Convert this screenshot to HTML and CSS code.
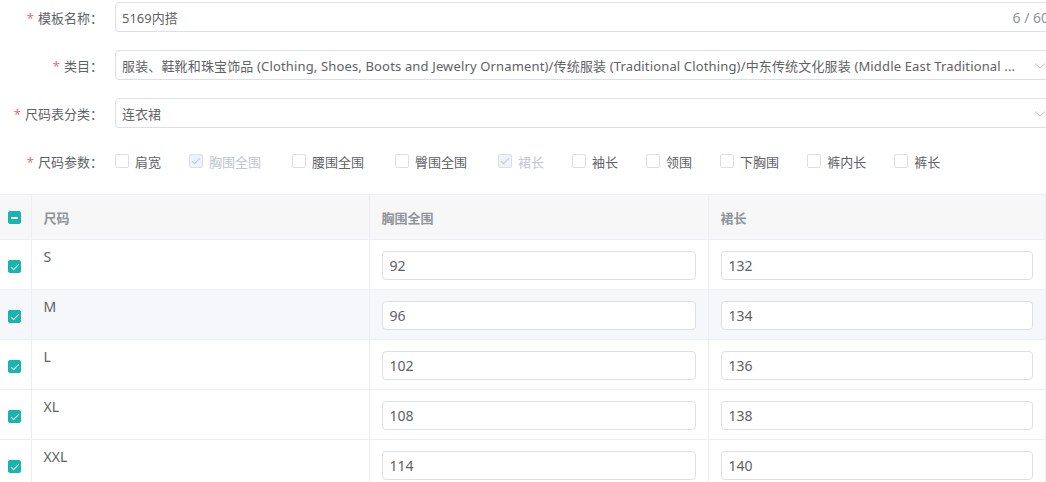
FILE: index.html
```html
<!DOCTYPE html>
<html lang="zh-CN">
<head>
  <meta charset="UTF-8" />
  <meta name="viewport" content="width=device-width, initial-scale=1.0"/>
  <title>尺码表模板</title>
  <link rel="stylesheet" href="styles.css">
</head>
<body>

  <form class="form">
    <div class="form-item">
      <label class="form-label required">模板名称：</label>
      <div class="input has-count">
        <span class="input-value">5169内搭</span>
        <span class="input-count">6 / 60</span>
      </div>
    </div>

    <div class="form-item">
      <label class="form-label required">类目：</label>
      <div class="input select">
        <span class="input-value long">服装、鞋靴和珠宝饰品 (Clothing, Shoes, Boots and Jewelry Ornament)/传统服装 (Traditional Clothing)/中东传统文化服装 (Middle East Traditional ...</span>
        <svg class="arrow" width="12" height="8" viewBox="0 0 12 8"><polyline points="1,1.5 6,6 11,1.5" fill="none" stroke="#c0c4cc" stroke-width="1"/></svg>
      </div>
    </div>

    <div class="form-item">
      <label class="form-label required">尺码表分类：</label>
      <div class="input select">
        <span class="input-value">连衣裙</span>
        <svg class="arrow" width="12" height="8" viewBox="0 0 12 8"><polyline points="1,1.5 6,6 11,1.5" fill="none" stroke="#c0c4cc" stroke-width="1"/></svg>
      </div>
    </div>

    <div class="form-item">
      <label class="form-label required">尺码参数：</label>
      <div class="checkbox-group">
        <span class="check-item"><span class="checkbox"></span>肩宽</span>
        <span class="check-item wide disabled"><span class="checkbox checked"></span>胸围全围</span>
        <span class="check-item wide"><span class="checkbox"></span>腰围全围</span>
        <span class="check-item wide"><span class="checkbox"></span>臀围全围</span>
        <span class="check-item disabled"><span class="checkbox checked"></span>裙长</span>
        <span class="check-item"><span class="checkbox"></span>袖长</span>
        <span class="check-item"><span class="checkbox"></span>领围</span>
        <span class="check-item"><span class="checkbox"></span>下胸围</span>
        <span class="check-item"><span class="checkbox"></span>裤内长</span>
        <span class="check-item"><span class="checkbox"></span>裤长</span>
      </div>
    </div>
  </form>

  <table class="size-table">
    <colgroup>
      <col class="col-check">
      <col class="col-size">
      <col class="col-val">
      <col>
    </colgroup>
    <thead>
      <tr>
        <th class="cell-check"><span class="checkbox active indeterminate"></span></th>
        <th>尺码</th>
        <th>胸围全围</th>
        <th>裙长</th>
      </tr>
    </thead>
    <tbody>
      <tr>
        <td class="cell-check"><span class="checkbox active"></span></td>
        <td class="cell-size">S</td>
        <td><div class="cell-input">92</div></td>
        <td><div class="cell-input">132</div></td>
      </tr>
      <tr class="hover">
        <td class="cell-check"><span class="checkbox active"></span></td>
        <td class="cell-size">M</td>
        <td><div class="cell-input">96</div></td>
        <td><div class="cell-input">134</div></td>
      </tr>
      <tr>
        <td class="cell-check"><span class="checkbox active"></span></td>
        <td class="cell-size">L</td>
        <td><div class="cell-input">102</div></td>
        <td><div class="cell-input">136</div></td>
      </tr>
      <tr>
        <td class="cell-check"><span class="checkbox active"></span></td>
        <td class="cell-size">XL</td>
        <td><div class="cell-input">108</div></td>
        <td><div class="cell-input">138</div></td>
      </tr>
      <tr>
        <td class="cell-check"><span class="checkbox active"></span></td>
        <td class="cell-size">XXL</td>
        <td><div class="cell-input">114</div></td>
        <td><div class="cell-input">140</div></td>
      </tr>
    </tbody>
  </table>

</body>
</html>
```

FILE: styles.css
```css
html, body {
  overflow: hidden;
}

body {
  font-family: "Noto Sans", "Noto Sans CJK SC", sans-serif;
  font-size: 14px;
  color: #606266;
  background: #fff;
  margin: 0;
  padding: 0;
}

/* Form */
.form {
  padding-top: 2px;
  margin-right: -13px;
}

.form-item {
  display: flex;
  align-items: center;
  height: 30px;
  margin-bottom: 18px;
}

.form-label {
  flex: 0 0 115px;
  box-sizing: border-box;
  padding-right: 12px;
  text-align: right;
  font-size: 13px;
  color: #606266;
  white-space: nowrap;
}

.form-label.required::before {
  content: "*";
  color: #f56c6c;
  margin-right: 4px;
}

.input {
  position: relative;
  flex: 1;
  min-width: 0;
  height: 30px;
  box-sizing: border-box;
  border: 1px solid #dcdfe6;
  border-radius: 4px;
  display: flex;
  align-items: center;
  padding: 0 9px 0 6px;
  gap: 10px;
}

.input-value {
  flex: 1;
  min-width: 0;
  white-space: nowrap;
  overflow: hidden;
  text-overflow: ellipsis;
  font-size: 13px;
  color: #606266;
}

.input-value.long {
  letter-spacing: 0.15px;
}

.input-count {
  font-size: 14px;
  color: #909399;
}

.select {
  padding-right: 16px;
}

.arrow {
  position: absolute;
  right: 12px;
  top: 11px;
}

/* Checkboxes */
.checkbox-group {
  display: flex;
  align-items: center;
  font-size: 13px;
}

.check-item {
  display: inline-flex;
  align-items: center;
  margin-right: 28px;
  color: #606266;
  white-space: nowrap;
}

.check-item.wide {
  margin-right: 31px;
}

.check-item .checkbox {
  margin-right: 6px;
}

.check-item.disabled {
  color: #c0c4cc;
}

.checkbox {
  position: relative;
  display: inline-block;
  width: 14px;
  height: 14px;
  box-sizing: border-box;
  border: 1px solid #dcdfe6;
  border-radius: 2px;
  background: #fff;
}

.checkbox.checked {
  background: #edf2fc;
}

.checkbox.checked::after {
  content: "";
  position: absolute;
  left: 4px;
  top: 1px;
  width: 3px;
  height: 7px;
  border: 1px solid #c0c4cc;
  border-left: 0;
  border-top: 0;
  transform: rotate(45deg);
}

.checkbox.active {
  background: #19b4b0;
  border-color: #19b4b0;
}

.checkbox.active::after {
  content: "";
  position: absolute;
  left: 4px;
  top: 1px;
  width: 3px;
  height: 7px;
  border: 1px solid #fff;
  border-left: 0;
  border-top: 0;
  transform: rotate(45deg);
}

.checkbox.indeterminate::after {
  left: 2px;
  top: 5px;
  width: 7px;
  height: 2px;
  border: 0;
  background: #fff;
  transform: none;
}

/* Table */
.size-table {
  width: 100%;
  border-collapse: collapse;
  table-layout: fixed;
  border-top: 1px solid #ebeef5;
}

.col-check { width: 31px; }
.col-size { width: 338px; }
.col-val { width: 339px; }

.size-table th,
.size-table td {
  border-right: 1px solid #ebeef5;
  border-bottom: 1px solid #ebeef5;
  padding: 0 12px;
  text-align: left;
  box-sizing: border-box;
}

.size-table thead tr {
  height: 45px;
}

.size-table tbody tr {
  height: 50px;
}

.size-table th {
  background: #f7f7f8;
  font-size: 13px;
  font-weight: 600;
  color: #909399;
}

.size-table td {
  padding-top: 1px;
}

.size-table .cell-check {
  padding: 0 0 0 8px;
}

.size-table td.cell-check {
  padding-top: 3px;
}

.size-table .cell-check .checkbox {
  display: block;
  width: 13px;
  height: 13px;
}

.size-table td.cell-size {
  vertical-align: top;
  padding-top: 7px;
  line-height: 20px;
}

.size-table tr.hover td {
  background: #f5f7fa;
}

.cell-input {
  height: 29px;
  box-sizing: border-box;
  border: 1px solid #dcdfe6;
  border-radius: 4px;
  background: #fff;
  padding: 0 7px;
  line-height: 27px;
  color: #606266;
}
```
